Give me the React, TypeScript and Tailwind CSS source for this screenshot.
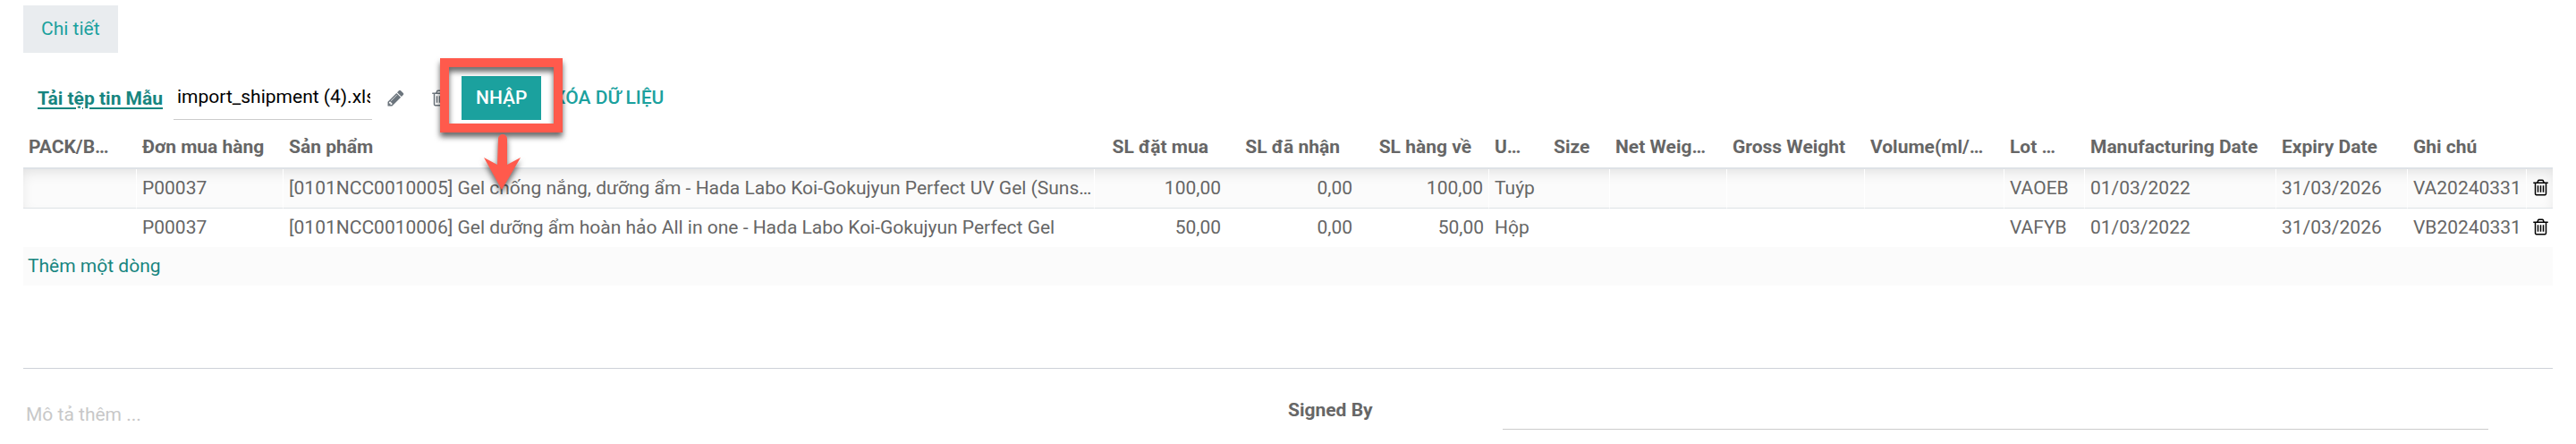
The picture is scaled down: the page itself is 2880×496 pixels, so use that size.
import type { ReactNode } from "react";

type Column = {
  label: string;
  width: string;
  numeric?: boolean;
  divider?: boolean;
};

const columns: Column[] = [
  { label: "PACK/BOX", width: "w-[127px]", divider: true },
  { label: "Đơn mua hàng", width: "w-[164px]", divider: true },
  { label: "Sản phẩm", width: "", divider: true },
  { label: "SL đặt mua", width: "w-[147px]", numeric: true },
  { label: "SL đã nhận", width: "w-[147px]", numeric: true },
  { label: "SL hàng về", width: "w-[147px]", numeric: true, divider: true },
  { label: "UoM Name", width: "w-[66px]" },
  { label: "Size", width: "w-[69px]", divider: true },
  { label: "Net Weight(kg)", width: "w-[131px]", divider: true },
  { label: "Gross Weight", width: "w-[154px]", divider: true },
  { label: "Volume(ml/pcs)", width: "w-[156px]", divider: true },
  { label: "Lot Number", width: "w-[90px]", divider: true },
  { label: "Manufacturing Date", width: "w-[214px]", divider: true },
  { label: "Expiry Date", width: "w-[147px]", divider: true },
  { label: "Ghi chú", width: "w-[133px]", divider: true },
];

const rows = [
  [
    "",
    "P00037",
    "[0101NCC0010005] Gel chống nắng, dưỡng ẩm - Hada Labo Koi-Gokujyun Perfect UV Gel (Sunscreen)",
    "100,00",
    "0,00",
    "100,00",
    "Tuýp",
    "",
    "",
    "",
    "",
    "VAOEB",
    "01/03/2022",
    "31/03/2026",
    "VA20240331",
  ],
  [
    "",
    "P00037",
    "[0101NCC0010006] Gel dưỡng ẩm hoàn hảo All in one - Hada Labo Koi-Gokujyun Perfect Gel",
    "50,00",
    "0,00",
    "50,00",
    "Hộp",
    "",
    "",
    "",
    "",
    "VAFYB",
    "01/03/2022",
    "31/03/2026",
    "VB20240331",
  ],
];

function PencilIcon() {
  return (
    <svg viewBox="0 0 1792 1792" className="size-[21px] fill-current" aria-hidden="true">
      <path d="M491 1536l91-91-235-235-91 91v107h128v128h107zm523-928q0-22-22-22-10 0-17 7l-542 542q-7 7-7 17 0 22 22 22 10 0 17-7l542-542q7-7 7-17zm-54-192l416 416-832 832h-416v-416zm683 96q0 53-37 90l-166 166-416-416 166-165q36-38 90-38 53 0 91 38l235 234q37 39 37 91z" />
    </svg>
  );
}

function TrashIcon() {
  return (
    <svg viewBox="0 0 1792 1792" className="size-[21px] fill-current" aria-hidden="true">
      <path d="M704 736v576q0 14-9 23t-23 9h-64q-14 0-23-9t-9-23v-576q0-14 9-23t23-9h64q14 0 23 9t9 23zm256 0v576q0 14-9 23t-23 9h-64q-14 0-23-9t-9-23v-576q0-14 9-23t23-9h64q14 0 23 9t9 23zm256 0v576q0 14-9 23t-23 9h-64q-14 0-23-9t-9-23v-576q0-14 9-23t23-9h64q14 0 23 9t9 23zm128 724v-948h-896v948q0 22 7 40.5t14.5 27 10.5 8.5h832q3 0 10.5-8.5t14.5-27 7-40.5zm-672-1076h448l-48-117q-7-9-17-11h-317q-10 2-17 11zm928 32v64q0 14-9 23t-23 9h-96v948q0 83-47 143.5t-113 60.5h-832q-66 0-113-58.5t-47-141.5v-952h-96q-14 0-23-9t-9-23v-64q0-14 9-23t23-9h309l70-167q15-37 54-63t79-26h320q40 0 79 26t54 63l70 167h309q14 0 23 9t9 23z" />
    </svg>
  );
}

// Red frame and arrow drawn over the button
function Callout({ children }: { children: ReactNode }) {
  return (
    <div className="relative">
      {children}
      <div className="pointer-events-none absolute -left-6 -right-6 -top-5 -bottom-3.5 z-10 border-10 border-[#ff5a4c] drop-shadow-[0_5px_3px_rgba(0,0,0,0.6)]" />
      <svg
        viewBox="0 0 60 80"
        className="pointer-events-none absolute left-4 top-full z-10 mt-3 h-20 w-[60px] overflow-visible fill-[#ff5a4c] drop-shadow-[0_4px_3px_rgba(0,0,0,0.6)]"
        aria-hidden="true"
      >
        <path d="M25 9a5 5 0 0 1 10 0V38L50 30L29 66L9 30L24 38Z" />
      </svg>
    </div>
  );
}

function Toolbar() {
  return (
    <div className="mt-[26px] flex h-[49px] items-center pl-4">
      <a href="#template" className="font-bold text-[#17857f] underline decoration-2 underline-offset-3">
        Tải tệp tin Mẫu
      </a>
      <div className="ml-3 h-full w-[222px] border-b border-[#ccc] pl-1">
        <input
          type="text"
          aria-label="import file"
          defaultValue="import_shipment (4).xlsx"
          className="h-[46px] w-[216px] text-black outline-none"
        />
      </div>
      <button type="button" aria-label="Edit" className="ml-4 text-[#6c757d]">
        <PencilIcon />
      </button>
      <button type="button" aria-label="Clear" className="ml-7 text-[#6c757d]">
        <TrashIcon />
      </button>
      <div className="ml-3.5">
        <Callout>
          <button type="button" className="h-[49px] bg-[#1ba19e] px-4 pb-0.5 font-medium text-white">
            NHẬP
          </button>
        </Callout>
      </div>
      <button type="button" className="h-[49px] px-3.5 pb-0.5 font-medium text-[#1ba19e]">
        XÓA DỮ LIỆU
      </button>
    </div>
  );
}

function ShipmentTable() {
  return (
    <table className="mt-[7px] w-full table-fixed border-separate border-spacing-0">
      <thead>
        <tr className="h-12">
          {columns.map((col) => (
            <th
              key={col.label}
              className={`truncate border-b-2 border-[#dee2e6] pl-1.5 pr-5 font-bold ${col.width} ${
                col.numeric ? "text-right" : "text-left"
              }`}
            >
              {col.label}
            </th>
          ))}
          <th className="w-[29px] border-b-2 border-[#dee2e6]" />
        </tr>
      </thead>
      <tbody>
        {rows.map((row, i) => (
          <tr
            key={row[2]}
            className={
              i === 0
                ? "h-11 bg-[#fbfbfb] shadow-[inset_0_6px_16px_-4px_rgba(0,0,0,0.12)]"
                : "h-[43px]"
            }
          >
            {row.map((value, c) => (
              <td
                key={c}
                className={`truncate pb-0.5 pl-1.5 ${columns[c].numeric ? "pr-1.5 text-right" : "text-left"} ${
                  i === 0 ? "border-b border-b-[#dee2e6]" : ""
                } ${i === 0 && columns[c].divider ? "border-r border-r-white" : ""}`}
              >
                {value}
              </td>
            ))}
            <td className={i === 0 ? "border-b border-b-[#dee2e6]" : ""}>
              <button type="button" aria-label="Delete row" className="ml-[5px] block pb-0.5 text-black">
                <TrashIcon />
              </button>
            </td>
          </tr>
        ))}
        <tr className="h-[43px] bg-[#fbfbfb]">
          <td colSpan={16} className="pb-0.5 pl-[5px]">
            <a href="#add" className="text-[#17857f]">
              Thêm một dòng
            </a>
          </td>
        </tr>
      </tbody>
    </table>
  );
}

export default function App() {
  return (
    <main className="bg-white px-[26px] pt-1.5 font-[Roboto,sans-serif] text-[21px] leading-8 text-[#666]">
      <nav className="flex">
        <a href="#detail" className="flex h-[53px] items-center bg-[#e9ecef] px-5 pb-0.5 text-[#1ba19e]">
          Chi tiết
        </a>
      </nav>

      <Toolbar />
      <ShipmentTable />

      {/* Footer fields */}
      <div className="mt-[92px] grid grid-cols-2 border-t border-[#ced1d8] pt-[30px]">
        <textarea
          aria-label="Mô tả thêm"
          rows={1}
          placeholder="Mô tả thêm ..."
          className="mt-[5px] block h-8 resize-none overflow-hidden px-[3px] outline-none placeholder:text-[#c8c8c8]"
        />
        <div className="flex pr-[72px]">
          <label htmlFor="signed-by" className="w-60 font-bold">
            Signed By
          </label>
          <input id="signed-by" type="text" className="h-[38px] flex-1 border-b border-[#ccc] outline-none" />
        </div>
      </div>
    </main>
  );
}
